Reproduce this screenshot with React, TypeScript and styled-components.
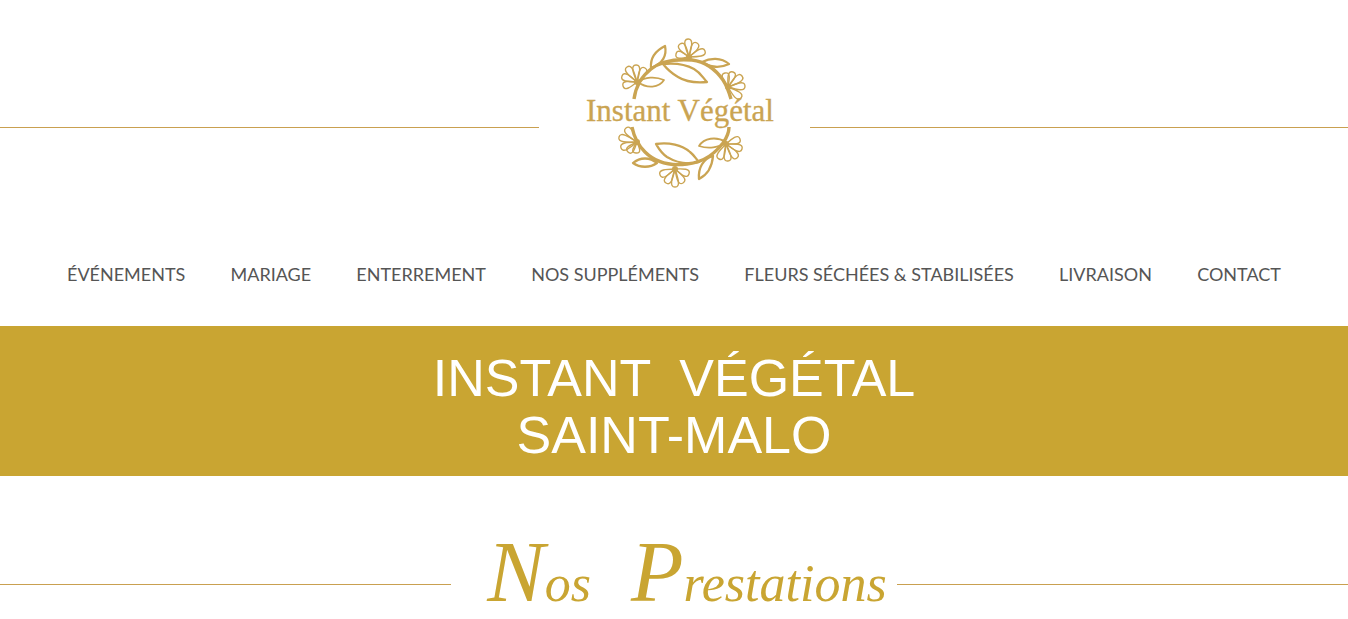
import React from "react";
import styled, { createGlobalStyle } from "styled-components";

const GlobalStyle = createGlobalStyle`
  * { box-sizing: border-box; }
  body { margin: 0; background: #fff; }
`;

const gold = "#c9a532";
const logoGold = "#caa452";

const RuledRow = styled.div`
  display: flex;
  align-items: center;
`;

const Rule = styled.span`
  flex: 1;
  height: 1px;
  background: #c9a050;
`;

const LogoLink = styled.a`
  display: block;
  line-height: 0;
`;

const Nav = styled.nav`
  padding: 9px 67px 42px;
`;

const NavList = styled.ul`
  display: flex;
  justify-content: space-between;
  margin: 0;
  padding: 0;
  list-style: none;
`;

const NavLink = styled.a`
  display: block;
  color: #555;
  font: 400 18px/20px Lato, "Liberation Sans", sans-serif;
  text-decoration: none;
  text-transform: uppercase;
  white-space: nowrap;
`;

const Banner = styled.section`
  padding: 24px 16px 12px;
  background: ${gold};
`;

const Title = styled.h1`
  margin: 0;
  color: #fff;
  font: 400 52px/57px "Liberation Sans", sans-serif;
  text-align: center;
  text-transform: uppercase;
  white-space: pre-wrap;
`;

const Services = styled.section`
  padding-top: 74px;
`;

const ScriptHeading = styled.h2`
  display: flex;
  gap: 40px;
  margin: 0;
  padding: 0 10px 0 36px;
  height: 68px;
  color: ${gold};
  font: italic 400 52px/44px "Liberation Serif", serif;
`;

const ScriptWord = styled.span`
  display: block;
  &::first-letter {
    font-size: 86px;
    line-height: 44px;
  }
`;

type Point = [number, number];

function Flower({ center, tips }: { center: Point; tips: Point[] }) {
  return (
    <g>
      {tips.map(([x, y]) => {
        const dx = x - center[0];
        const dy = y - center[1];
        const length = Math.hypot(dx, dy);
        const angle = (Math.atan2(dy, dx) * 180) / Math.PI + 90;
        return (
          <path
            key={`${x},${y}`}
            strokeWidth={1.4}
            transform={`translate(${center[0]} ${center[1]}) rotate(${angle})`}
            d={`M0 0 C-3 ${-length * 0.5} -6 ${-length} 0 ${-length} C6 ${-length} 3 ${-length * 0.5} 0 0Z`}
          />
        );
      })}
      <circle cx={center[0]} cy={center[1]} r={3} fill={logoGold} stroke="none" />
    </g>
  );
}

function Logo() {
  return (
    <svg width="271" height="255" viewBox="-41 -30 271 255" role="img" aria-label="Instant Végétal">
      <g fill="none" stroke={logoGold} strokeWidth={2.3} strokeLinejoin="round">
        <path strokeWidth={3.4} d="M54 69C56 55 62 46 71 39C82 30 98 29 112 30C127 32 136 40 143 50C147 56 149 62 151 69" />
        <path d="M71 38C70 27 77 20 85 16C87 25 83 34 71 38Z" />
        <path d="M83 34C93 33 105 34 114 39C121 43 123 48 127 52C116 53 106 52 98 47C91 43 87 39 83 34Z" />
        <path d="M122 32C130 28 141 27 149 34C141 38 130 38 122 32Z" />
        <path strokeWidth={1.8} d="M58 52C65 47 75 46 84 50C79 58 67 59 58 52Z" />
        <Flower center={[57, 52]} tips={[[43, 56], [42, 46], [47, 37], [56, 35], [65, 38]]} />
        <Flower center={[109, 27]} tips={[[96, 24], [100, 14], [108, 9], [117, 13], [125, 21]]} />
        <Flower center={[148, 57]} tips={[[145, 43], [153, 42], [162, 46], [165, 56], [161, 68]]} />

        <path strokeWidth={3.4} d="M52 97C54 107 58 115 65 122C76 133 91 136 107 134C126 132 136 122 143 113C148 106 149 101 149 97" />
        <path d="M53 133C60 127 70 127 77 133C70 138 60 138 53 133Z" />
        <path d="M76 114C89 112 102 115 110 122C114 125 116 129 119 132C107 135 95 132 87 127C81 123 79 119 76 114Z" />
        <path d="M133 126C123 129 118 138 119 149C127 145 132 138 133 126Z" />
        <path strokeWidth={1.8} d="M119 116C124 108 136 106 146 112C139 118 128 119 119 116Z" />
        <Flower center={[57, 112]} tips={[[46, 98], [39, 107], [41, 118], [48, 122], [56, 123]]} />
        <Flower center={[95, 139]} tips={[[80, 145], [86, 153], [95, 157], [103, 153], [109, 144]]} />
        <Flower center={[146, 114]} tips={[[139, 129], [148, 131], [157, 128], [162, 119], [160, 109]]} />
      </g>
      <text x="6" y="91" fill={logoGold} stroke={logoGold} strokeWidth={0.3} fontFamily="Liberation Serif, serif" fontSize="31">
        Instant Végétal
      </text>
    </svg>
  );
}

const links = [
  "Événements",
  "Mariage",
  "Enterrement",
  "Nos suppléments",
  "Fleurs séchées & stabilisées",
  "Livraison",
  "Contact",
];

export default function App() {
  return (
    <>
      <GlobalStyle />
      <header>
        <RuledRow>
          <Rule />
          <LogoLink href="#">
            <Logo />
          </LogoLink>
          <Rule />
        </RuledRow>
        <Nav>
          <NavList>
            {links.map((label) => (
              <li key={label}>
                <NavLink href="#">{label}</NavLink>
              </li>
            ))}
          </NavList>
        </Nav>
      </header>
      <main>
        <Banner>
          <Title>
            {"Instant  Végétal"}
            <br />
            Saint-Malo
          </Title>
        </Banner>
        <Services>
          <RuledRow>
            <Rule />
            <ScriptHeading>
              <ScriptWord>Nos</ScriptWord>
              <ScriptWord>Prestations</ScriptWord>
            </ScriptHeading>
            <Rule />
          </RuledRow>
        </Services>
      </main>
    </>
  );
}
